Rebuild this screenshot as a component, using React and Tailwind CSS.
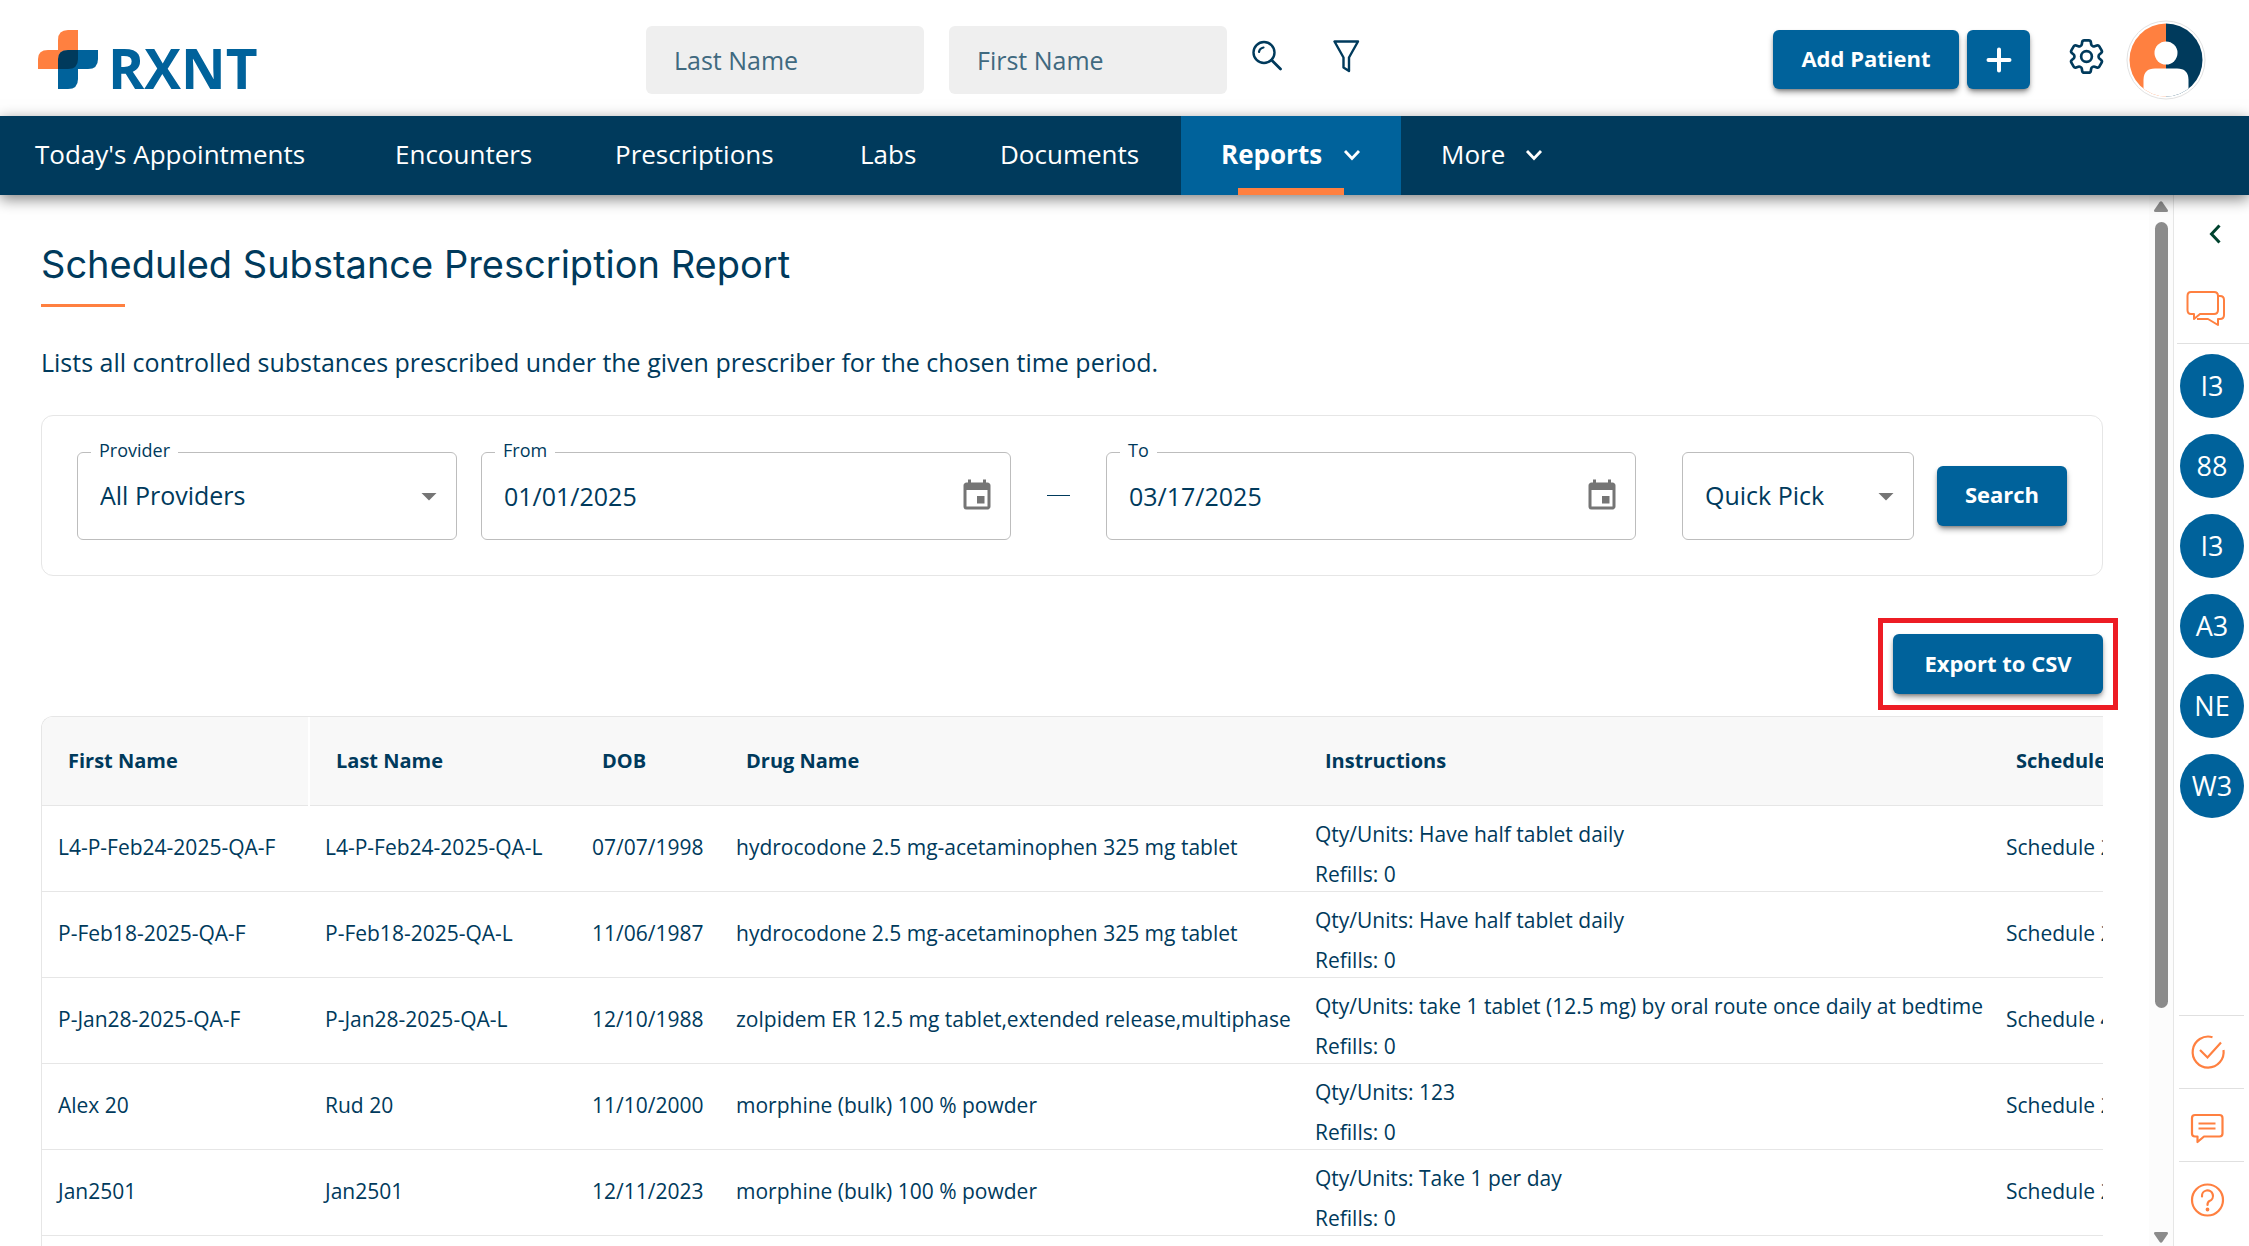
import { useState } from 'react'
import { HiOutlineCog6Tooth } from 'react-icons/hi2'
import { MdArrowDropDown, MdEvent } from 'react-icons/md'

const NAV_ITEMS = [
  { label: "Today's Appointments", width: 'w-[355px] pl-[35px]' },
  { label: 'Encounters', width: 'w-[220px] pl-10' },
  { label: 'Prescriptions', width: 'w-[245px] pl-10' },
  { label: 'Labs', width: 'w-[140px] pl-10' },
  { label: 'Documents', width: 'w-[221px] pl-10' },
  { label: 'Reports', width: 'w-[220px] px-10', menu: true },
  { label: 'More', width: 'w-[182px] px-10', menu: true },
]

const PRESCRIPTIONS = [
  { id: 1, first: 'L4-P-Feb24-2025-QA-F', last: 'L4-P-Feb24-2025-QA-L', dob: '07/07/1998', drug: 'hydrocodone 2.5 mg-acetaminophen 325 mg tablet', qty: 'Have half tablet daily', refills: 0, schedule: 2 },
  { id: 2, first: 'P-Feb18-2025-QA-F', last: 'P-Feb18-2025-QA-L', dob: '11/06/1987', drug: 'hydrocodone 2.5 mg-acetaminophen 325 mg tablet', qty: 'Have half tablet daily', refills: 0, schedule: 2 },
  { id: 3, first: 'P-Jan28-2025-QA-F', last: 'P-Jan28-2025-QA-L', dob: '12/10/1988', drug: 'zolpidem ER 12.5 mg tablet,extended release,multiphase', qty: 'take 1 tablet (12.5 mg) by oral route once daily at bedtime', refills: 0, schedule: 4 },
  { id: 4, first: 'Alex 20', last: 'Rud 20', dob: '11/10/2000', drug: 'morphine (bulk) 100 % powder', qty: '123', refills: 0, schedule: 2 },
  { id: 5, first: 'Jan2501', last: 'Jan2501', dob: '12/11/2023', drug: 'morphine (bulk) 100 % powder', qty: 'Take 1 per day', refills: 0, schedule: 2 },
]

const CONTACTS = ['I3', '88', 'I3', 'A3', 'NE', 'W3']

function Logo() {
  return (
    <a href="#home" aria-label="RXNT home" className="flex items-start gap-[10px]">
      <svg width="60" height="60" viewBox="0 0 60 60">
        <path d="M20 20V10Q20 0 30 0H40V20Z" fill="#ff8040" />
        <path d="M20 39H0V29Q0 20 10 20H20Z" fill="#ff8040" />
        <path d="M40 20H60V29Q60 39 50 39H40Z" fill="#00629b" />
        <path d="M20 39H40V49Q40 59 30 59H20Z" fill="#00629b" />
        <path d="M20 20H40V39H20Z" fill="#00629b" />
        <path d="M20 39V29Q20 20 30 20H40V29Q40 39 30 39Z" fill="#003a5c" />
        <path d="M20 20H30Q20 20 20 29Z" fill="#ff8040" />
      </svg>
      <span className="pt-[18px] text-[55px] leading-[40px] font-bold text-[#00629b]">RXNT</span>
    </a>
  )
}

function SearchIcon() {
  return (
    <svg width="32" height="32" viewBox="0 0 32 32" fill="none" stroke="#003a5c" strokeLinecap="round">
      <circle cx="12" cy="12.5" r="10.5" strokeWidth="2.4" />
      <path d="M19.5 20L28.5 29" strokeWidth="2.8" />
      <path d="M7 12A5.5 5.5 0 0 1 11.5 7.5" strokeWidth="2.2" />
    </svg>
  )
}

function FilterIcon() {
  return (
    <svg width="28" height="34" viewBox="0 0 28 34" fill="none" stroke="#003a5c" strokeWidth="2.4" strokeLinejoin="round">
      <path d="M1.500 2.500H25L16 18.500V32L10.500 28.500V18.500Z" />
    </svg>
  )
}

function Chevron() {
  return (
    <svg width="18" height="12" viewBox="0 0 18 12" fill="none" stroke="currentColor" strokeWidth="2.800">
      <path d="M2 2L9 9.500L16 2" />
    </svg>
  )
}

function UserAvatar() {
  return (
    <svg width="80" height="80" viewBox="0 0 80 80">
      <defs>
        <clipPath id="avatar-clip">
          <circle cx="40" cy="40" r="36.500" />
        </clipPath>
      </defs>
      <circle cx="40" cy="40" r="39" fill="#fff" stroke="#e2e2e2" />
      <g clipPath="url(#avatar-clip)">
        <rect width="40" height="80" fill="#ff8040" />
        <rect x="40" width="40" height="80" fill="#003a5c" />
        <circle cx="40" cy="33" r="11.500" fill="#fff" />
        <path d="M17.500 80V60Q17.500 48.500 29 48.500H51Q62.500 48.500 62.500 60V80Z" fill="#fff" />
      </g>
    </svg>
  )
}

function Header() {
  return (
    <header className="flex h-[116px] shrink-0 items-start bg-white pr-[43px] pl-[38px]">
      <div className="w-[608px] pt-[30px]">
        <Logo />
      </div>

      <form className="flex gap-[25px] pt-[26px]" onSubmit={e => e.preventDefault()}>
        <input
          type="text"
          aria-label="Last Name"
          placeholder="Last Name"
          className="h-[68px] w-[278px] rounded-md bg-[#efefef] px-7 text-[25px] placeholder:text-[#40697f] placeholder:opacity-100"
        />
        <input
          type="text"
          aria-label="First Name"
          placeholder="First Name"
          className="h-[68px] w-[278px] rounded-md bg-[#efefef] px-7 text-[25px] placeholder:text-[#40697f] placeholder:opacity-100"
        />
        <button type="submit" aria-label="Search patients" className="h-[60px]">
          <SearchIcon />
        </button>
        <button type="button" aria-label="Filter" className="ml-6 h-[60px]">
          <FilterIcon />
        </button>
      </form>

      <div className="ml-auto flex items-start">
        <button className="mt-[30px] mr-2 h-[59px] w-[186px] rounded-md bg-[#00629b] pb-[2px] text-[22px] font-bold text-white shadow-md shadow-black/40">
          Add Patient
        </button>
        <button aria-label="Add" className="mt-[30px] flex h-[59px] w-[63px] items-center justify-center rounded-md bg-[#00629b] shadow-md shadow-black/40">
          <svg width="26" height="26" viewBox="0 0 26 26" stroke="#fff" strokeWidth="4" strokeLinecap="round">
            <path d="M13 2.500V23.500M2.500 13H23.500" />
          </svg>
        </button>
        <button aria-label="Settings" className="mt-[35px] mr-[18px] ml-[35px] text-[#003a5c]">
          <HiOutlineCog6Tooth size={43} />
        </button>
        <button aria-label="Account" className="mt-5">
          <UserAvatar />
        </button>
      </div>
    </header>
  )
}

function NavBar({ active, onSelect }) {
  return (
    <nav className="relative z-10 flex h-[79px] shrink-0 bg-[#003a5c] text-[26px] text-white shadow-[0_4px_14px_rgba(0,0,0,0.5)]">
      {NAV_ITEMS.map(item => (
        <button
          key={item.label}
          onClick={() => onSelect(item.label)}
          className={`relative flex items-center justify-between pb-[2px] text-left whitespace-nowrap ${item.width} ${
            active === item.label ? 'bg-[#00629b] font-bold' : ''
          }`}
        >
          {item.label}
          {item.menu && <Chevron />}
          {active === item.label && (
            <span className="absolute inset-x-[57px] bottom-0 h-[7px] bg-[#ff8040]" />
          )}
        </button>
      ))}
    </nav>
  )
}

function FieldLabel({ htmlFor, children }) {
  return (
    <label htmlFor={htmlFor} className="absolute -top-3 left-[14px] bg-white px-2 text-[18px] leading-5">
      {children}
    </label>
  )
}

function DateField({ id, label, value, onChange }) {
  return (
    <div className="relative flex-1">
      <FieldLabel htmlFor={id}>{label}</FieldLabel>
      <input
        id={id}
        type="text"
        value={value}
        onChange={e => onChange(e.target.value)}
        className="h-[88px] w-full rounded-md border border-[#bdbdbd] pr-16 pl-[22px] text-[25px]"
      />
      <button aria-label={`Choose ${label} date`} className="absolute top-[26px] right-4 text-[#757575]">
        <MdEvent size={36} />
      </button>
    </div>
  )
}

function Filters() {
  const [from, setFrom] = useState('01/01/2025')
  const [to, setTo]     = useState('03/17/2025')

  return (
    <div className="mt-[37px] flex h-[161px] items-center rounded-xl border border-[#e6e6e6] px-[35px]">
      <div className="relative w-[380px]">
        <FieldLabel htmlFor="provider">Provider</FieldLabel>
        <select id="provider" className="h-[88px] w-full appearance-none rounded-md border border-[#bdbdbd] px-[22px] text-[25px]">
          <option>All Providers</option>
        </select>
        <MdArrowDropDown size={36} className="pointer-events-none absolute top-[26px] right-[10px] text-[#757575]" />
      </div>

      <div className="ml-6 flex flex-1 items-center gap-9">
        <DateField id="from" label="From" value={from} onChange={setFrom} />
        <span className="h-px w-[23px] bg-[#003a5c]" />
        <DateField id="to" label="To" value={to} onChange={setTo} />
      </div>

      <div className="relative ml-[46px] w-[232px]">
        <select aria-label="Quick Pick" className="h-[88px] w-full appearance-none rounded-md border border-[#bdbdbd] px-[22px] text-[25px]">
          <option>Quick Pick</option>
        </select>
        <MdArrowDropDown size={36} className="pointer-events-none absolute top-[26px] right-[10px] text-[#757575]" />
      </div>

      <button className="ml-[23px] h-[60px] w-[130px] rounded-md bg-[#00629b] pb-[2px] text-[22px] font-bold text-white shadow-md shadow-black/40">
        Search
      </button>
    </div>
  )
}

function ReportTable() {
  return (
    <div className="mt-[6px] overflow-hidden rounded-tl-xl border-t border-l border-[#e6e6e6]">
      <table className="w-[2250px] table-fixed text-left text-[21px]">
        <colgroup>
          <col className="w-[267px]" />
          <col className="w-[267px]" />
          <col className="w-[144px]" />
          <col className="w-[579px]" />
          <col className="w-[691px]" />
          <col />
        </colgroup>
        <thead>
          <tr className="h-[88px] border-b border-[#e6e6e6] bg-[#f8f8f8] text-[20px]">
            <th className="border-r-2 border-white pl-[26px] font-bold">First Name</th>
            <th className="pl-[26px] font-bold">Last Name</th>
            <th className="pl-[26px] font-bold">DOB</th>
            <th className="pl-[26px] font-bold">Drug Name</th>
            <th className="pl-[26px] font-bold">Instructions</th>
            <th className="pl-[26px] font-bold">Schedule</th>
          </tr>
        </thead>
        <tbody>
          {PRESCRIPTIONS.map(rx => (
            <tr key={rx.id} className="h-[86px] border-b border-[#e6e6e6] whitespace-nowrap">
              <td className="pl-4">{rx.first}</td>
              <td className="pl-4">{rx.last}</td>
              <td className="pl-4">{rx.dob}</td>
              <td className="pl-4">{rx.drug}</td>
              <td className="pt-2 pl-4">
                <div className="h-[77px] leading-10">
                  <p>Qty/Units: {rx.qty}</p>
                  <p>Refills: {rx.refills}</p>
                </div>
              </td>
              <td className="pl-4">Schedule {rx.schedule}</td>
            </tr>
          ))}
          <tr className="h-[86px]">
            <td colSpan={6} />
          </tr>
        </tbody>
      </table>
    </div>
  )
}

function ScrollRail() {
  return (
    <div className="flex w-6 shrink-0 flex-col items-center bg-[#fcfcfc] pt-[6px] pb-[3px]" aria-hidden="true">
      <svg width="16" height="12" viewBox="0 0 16 12" fill="#8b8b8b">
        <path d="M6.500 1.200Q8 -0.500 9.500 1.200L14.800 9Q15.500 11 13.500 11H2.500Q0.500 11 1.200 9Z" />
      </svg>
      <div className="mt-[9px] w-[13px] flex-[786] rounded-full bg-[#8b8b8b]" />
      <div className="flex-[223]" />
      <svg width="16" height="12" viewBox="0 0 16 12" fill="#8b8b8b">
        <path d="M6.500 10.800Q8 12.500 9.500 10.800L14.800 3Q15.500 1 13.500 1H2.500Q0.500 1 1.200 3Z" />
      </svg>
    </div>
  )
}

function SideBar() {
  return (
    <aside className="flex w-[76px] shrink-0 flex-col border-l border-[#e6e6e6] text-[#ff8040]">
      <button aria-label="Expand panel" className="mt-[29px] ml-[35px] w-3 text-[#00432f]">
        <svg width="12" height="20" viewBox="0 0 12 20" fill="none" stroke="currentColor" strokeWidth="3">
          <path d="M10.500 1.500L2.500 10L10.500 18.500" />
        </svg>
      </button>
      <button aria-label="Conversations" className="mt-[46px] ml-3 w-10">
        <svg width="40" height="38" viewBox="0 0 40 38" fill="none" stroke="currentColor" strokeWidth="2" strokeLinejoin="round">
          <path d="M5 2H28Q32 2 32 6V20Q32 24 28 24H14L8 29V24H5Q1.500 24 1.500 20V6Q1.500 2 5 2Z" />
          <path d="M32 6H34Q38 6 38 10V25Q38 29 34 29H32V35L22 29H11" />
        </svg>
      </button>
      <div className="mt-[15px] ml-[3px] border-t border-[#e0e0e0]" />

      <ul className="mt-[10px] ml-[6px] flex flex-col gap-4">
        {CONTACTS.map((initials, i) => (
          <li key={i}>
            <button className="flex size-16 items-center justify-center rounded-full bg-[#00629b] text-[27px] text-white">
              {initials}
            </button>
          </li>
        ))}
      </ul>

      <div className="mt-auto mr-[5px] ml-[5px] flex flex-col">
        <button aria-label="Tasks" className="h-[73px] border-t border-[#e0e0e0] pl-[11px]">
          <svg width="36" height="36" viewBox="0 0 36 36" fill="none" stroke="currentColor" strokeWidth="2.200">
            <path d="M22.500 3.200A15.500 15.500 0 1 0 33.500 16" />
            <path d="M10 16L17.500 23.500L31 8.500" />
          </svg>
        </button>
        <button aria-label="Messages" className="h-[73px] border-t border-[#e0e0e0] pt-2 pl-[11px]">
          <svg width="36" height="32" viewBox="0 0 36 32" fill="none" stroke="currentColor" strokeWidth="2.200" strokeLinejoin="round">
            <path d="M5 2H29.500Q32.500 2 32.500 5V20.500Q32.500 23.500 29.500 23.500H14L7.500 29V23.500H5Q2 23.500 2 20.500V5Q2 2 5 2Z" />
            <path d="M8.500 10.500H25.500M8.500 15.500H25.500" />
          </svg>
        </button>
        <button aria-label="Help" className="h-[85px] border-t border-[#e0e0e0] pb-2 pl-[11px]">
          <svg width="36" height="36" viewBox="0 0 36 36" fill="none" stroke="currentColor" strokeWidth="2.200" strokeLinecap="round">
            <circle cx="17.500" cy="18" r="15.500" />
            <path d="M12 14.500A5.500 5.500 0 1 1 19.500 19Q17.500 20 17.500 23" />
            <circle cx="17.500" cy="27.500" r="0.800" fill="currentColor" />
          </svg>
        </button>
      </div>
    </aside>
  )
}

function App() {
  const [active, setActive] = useState('Reports')

  return (
    <div className="flex h-screen flex-col overflow-hidden bg-white font-['Open_Sans',sans-serif] text-[#003a5c]">
      <Header />
      <NavBar active={active} onSelect={setActive} />

      <div className="flex min-h-0 flex-1">
        <main className="min-w-0 flex-1 overflow-hidden pr-[46px] pl-[41px]">
          {/* Title */}
          <h1 className="mt-[49px] font-['Inter',sans-serif] text-[38px] leading-10">
            Scheduled Substance Prescription Report
          </h1>
          <div className="mt-5 h-[3px] w-[84px] bg-[#ff8040]" />
          <p className="mt-[39px] text-[25px] leading-8">
            Lists all controlled substances prescribed under the given prescriber for the chosen time period.
          </p>

          <Filters />

          {/* Export, with highlight frame */}
          <div className="mt-[42px] -mr-[15px] flex justify-end">
            <div className="border-5 border-[#ed1c24] px-[10px] py-[11px]">
              <button className="h-[60px] w-[210px] rounded-md bg-[#00629b] pb-[2px] text-[22px] font-bold text-white shadow-md shadow-black/40">
                Export to CSV
              </button>
            </div>
          </div>

          <ReportTable />
        </main>
        <ScrollRail />
        <SideBar />
      </div>
    </div>
  )
}

export default App
